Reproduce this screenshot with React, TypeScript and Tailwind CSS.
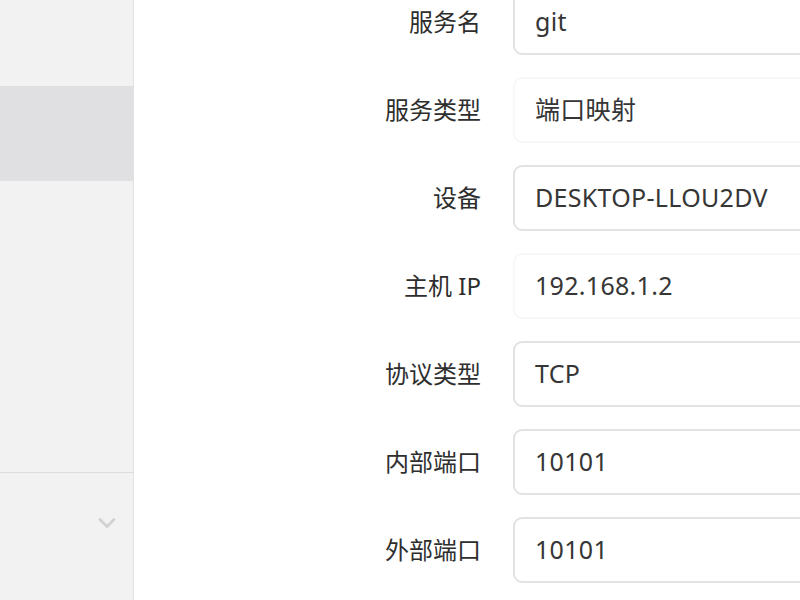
import { ChevronDown } from "lucide-react";

type Field = {
  label: string;
  value: string;
  editable: boolean;
};

const FIELDS: Field[] = [
  { label: "服务名", value: "git", editable: true },
  { label: "服务类型", value: "端口映射", editable: false },
  { label: "设备", value: "DESKTOP-LLOU2DV", editable: true },
  { label: "主机 IP", value: "192.168.1.2", editable: false },
  { label: "协议类型", value: "TCP", editable: true },
  { label: "内部端口", value: "10101", editable: true },
  { label: "外部端口", value: "10101", editable: true },
];

function Sidebar() {
  return (
    <aside className="w-[134px] shrink-0 h-full bg-[#f2f2f2] border-r border-[#e2e2e2] flex flex-col">
      <div className="h-[86px]" />
      {/* selected entry */}
      <div className="h-[95px] bg-[#e0e0e2]" />
      <div className="flex-1 border-b border-[#dcdcdc]" />
      <div className="h-[127px] flex justify-end pt-[36px] pr-[12px]">
        <ChevronDown className="w-7 h-7 text-[#d2d2d2]" strokeWidth={2.5} />
      </div>
    </aside>
  );
}

function FieldRow({ field }: { field: Field }) {
  return (
    <div className="flex items-center h-[66px]">
      <label className="w-[347px] shrink-0 text-right text-[24px] text-[#2e2e2e]">
        {field.label}
      </label>
      <div
        className={`ml-[32px] w-[420px] shrink-0 h-[66px] rounded-[9px] flex items-center px-[20px] text-[25px] tracking-[0.3px] text-[#363636] ${
          field.editable ? "border-2 border-[#e2e2e2] bg-white" : "border-2 border-[#f8f8f8]"
        }`}
      >
        {field.value}
      </div>
    </div>
  );
}

export default function App() {
  return (
    <div
      className="w-[800px] h-[600px] overflow-hidden flex bg-white"
      style={{ fontFamily: '"Noto Sans", "Noto Sans CJK SC", sans-serif' }}
    >
      <Sidebar />
      <main className="flex-1 overflow-hidden">
        <div className="-mt-[11px] flex flex-col gap-[22px]">
          {FIELDS.map((f) => (
            <FieldRow key={f.label} field={f} />
          ))}
        </div>
      </main>
    </div>
  );
}
